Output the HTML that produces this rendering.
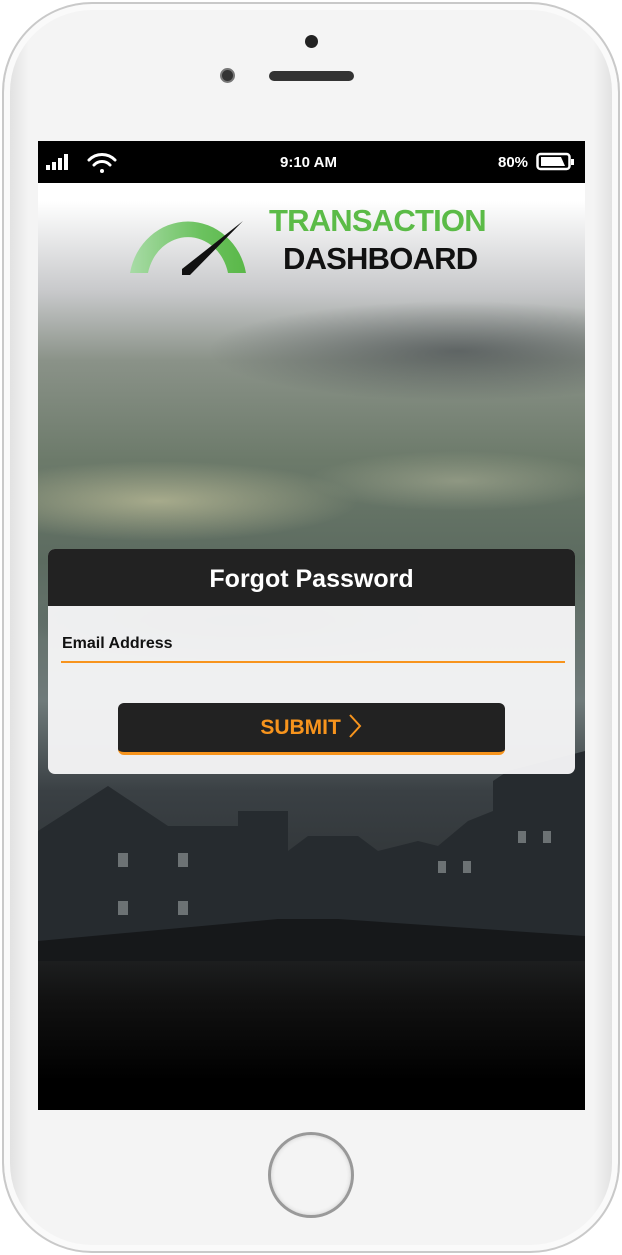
<!DOCTYPE html>
<html><head><meta charset="utf-8"><style>
*{margin:0;padding:0;box-sizing:border-box}
body{width:622px;height:1255px;background:#fff;position:relative;overflow:hidden;font-family:"Liberation Sans",sans-serif}
.phone{position:absolute;left:2px;top:2px;width:618px;height:1251px;border-radius:90px;background:linear-gradient(90deg,#dcdcdc,#f4f4f4 4%,#f4f4f4 96%,#dcdcdc);border:2px solid #c9c9c9;box-shadow:inset 0 0 0 6px #fafafa}
.screen{position:absolute;left:38px;top:141px;width:547px;height:969px;overflow:hidden;background:#000}
.bg{position:absolute;inset:0;background:
radial-gradient(ellipse 200px 40px at 120px 360px,rgba(220,215,170,.55),transparent),
radial-gradient(ellipse 250px 50px at 420px 210px,rgba(60,65,70,.6),transparent),
radial-gradient(ellipse 220px 40px at 200px 480px,rgba(40,55,55,.6),transparent),
radial-gradient(ellipse 150px 30px at 420px 340px,rgba(200,200,170,.4),transparent),
linear-gradient(180deg,#fff 0,#fff 60px,#c8c9cb 150px,#8a9288 220px,#6c7a6a 320px,#5c6b60 420px,#6f7a7a 560px,#3a4044 650px,#2e3234 760px,#111 860px,#000 940px)}
.houses{position:absolute;left:0;top:600px;width:547px;height:220px}
.status{position:absolute;left:0;top:0;width:547px;height:42px;background:#000;color:#fff;font-weight:bold;font-size:15px}
.card{position:absolute;left:10px;top:408px;width:527px;height:225px;border-radius:7px;background:rgba(245,245,246,.96);overflow:hidden}
.card .hd{height:57px;background:#222;color:#fff;font-size:25px;font-weight:bold;text-align:center;line-height:60px}
.lbl{position:absolute;left:14px;top:86px;font-size:16px;font-weight:bold;color:#111}
.line{position:absolute;left:13px;top:112px;width:504px;height:1.5px;background:#f7941d}
.btn{position:absolute;left:70px;top:154px;width:387px;height:52px;background:#222;border-radius:6px;border-bottom:3px solid #f7941d;color:#f7941d;font-weight:bold;font-size:21px;text-align:center;line-height:50px}
</style></head><body>
<div class="phone"></div>
<div style="position:absolute;left:305px;top:35px;width:13px;height:13px;border-radius:50%;background:#222"></div>
<div style="position:absolute;left:220px;top:68px;width:15px;height:15px;border-radius:50%;background:#333;border:2px solid #777"></div>
<div style="position:absolute;left:269px;top:71px;width:85px;height:10px;border-radius:5px;background:#333"></div>
<div style="position:absolute;left:268px;top:1132px;width:86px;height:86px;border-radius:50%;border:3px solid #999;background:#f4f4f4;box-shadow:inset 0 0 4px #ccc"></div>
<div class="screen">
<div class="bg"></div>
<svg class="houses" viewBox="0 0 547 220">
<path d="M0 90 L70 45 L130 85 L200 85 L200 70 L250 70 L250 110 L270 95 L320 95 L340 110 L380 100 L400 105 L430 80 L455 70 L455 40 L470 30 L547 10 L547 220 L0 220Z" fill="#262b2f"/>
<g fill="#6c7274"><rect x="80" y="112" width="10" height="14"/><rect x="140" y="112" width="10" height="14"/><rect x="80" y="160" width="10" height="14"/><rect x="140" y="160" width="10" height="14"/><rect x="400" y="120" width="8" height="12"/><rect x="425" y="120" width="8" height="12"/><rect x="480" y="90" width="8" height="12"/><rect x="505" y="90" width="8" height="12"/></g>
<path d="M0 200 L240 178 L300 178 L547 195 L547 220 L0 220Z" fill="#16181a"/>
</svg>
<div class="status">
<svg style="position:absolute;left:8px;top:12px" width="28" height="18"><rect x="0" y="12" width="4" height="5" fill="#fff"/><rect x="6" y="9" width="4" height="8" fill="#fff"/><rect x="12" y="5" width="4" height="12" fill="#fff"/><rect x="18" y="1" width="4" height="16" fill="#fff"/></svg>
<svg style="position:absolute;left:48px;top:10px" width="32" height="24" fill="none" stroke="#fff" stroke-width="3" stroke-linecap="round"><path d="M3 9 A18 18 0 0 1 29 9"/><path d="M8 14 A11 11 0 0 1 24 14"/><circle cx="16" cy="20" r="2" fill="#fff" stroke="none"/></svg>
<span style="position:absolute;left:242px;top:13px">9:10 AM</span>
<span style="position:absolute;left:460px;top:13px">80%</span>
<svg style="position:absolute;left:498px;top:11px" width="40" height="20"><rect x="1.5" y="2" width="32" height="15" rx="3" fill="none" stroke="#fff" stroke-width="2.5"/><path d="M5 5 H25 L29 14 H5Z" fill="#fff"/><rect x="35" y="7" width="3" height="6" fill="#fff"/></svg>
</div>
<svg style="position:absolute;left:90px;top:60px" width="130" height="80" viewBox="0 0 130 80">
<defs><linearGradient id="g" x1="0" x2="1"><stop offset="0" stop-color="#a8dba6"/><stop offset=".6" stop-color="#6cc260"/><stop offset="1" stop-color="#5ab848"/></linearGradient></defs>
<path d="M2 72 A59 63 0 0 1 118 72 L100 72 A41 46 0 0 0 20 72Z" fill="url(#g)"/>
<path d="M115 20 L62 74 L54 74 L54 68Z" fill="#111"/>
</svg>
<div style="position:absolute;left:231px;top:62px;font-size:31px;font-weight:bold;color:#5bbb47;letter-spacing:-.8px">TRANSACTION</div>
<div style="position:absolute;left:245px;top:100px;font-size:31px;font-weight:bold;color:#111;letter-spacing:-.8px">DASHBOARD</div>
<div class="card">
<div class="hd">Forgot Password</div>
<div class="lbl">Email Address</div>
<div class="line"></div>
<div class="btn">SUBMIT <svg width="16" height="26" style="vertical-align:-5px" fill="none" stroke="#f7941d" stroke-width="2"><path d="M3 2 L13 13 L3 24"/></svg></div>
</div>
</div>
</body></html>
